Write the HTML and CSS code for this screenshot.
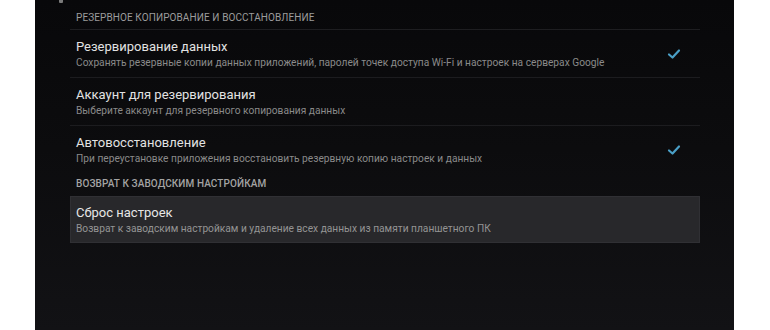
FILE: index.html
```html
<!DOCTYPE html>
<html lang="ru">
<head>
<meta charset="utf-8">
<link rel="stylesheet" href="styles.css">
</head>
<body>
<div class="screen">
  <span class="top-mark"></span>
  <div class="list">
    <div class="header first">РЕЗЕРВНОЕ КОПИРОВАНИЕ И ВОССТАНОВЛЕНИЕ</div>
    <div class="item divided">
      <div class="text">
        <div class="title">Резервирование данных</div>
        <div class="sub">Сохранять резервные копии данных приложений, паролей точек доступа Wi-Fi и настроек на серверах Google</div>
      </div>
      <svg class="check" viewBox="0 0 14 12" width="14" height="12"><path d="M2 6.5 L5.5 9.5 L12 2.5" fill="none" stroke="#4a9fc6" stroke-width="2.2" stroke-linecap="round" stroke-linejoin="round"/></svg>
    </div>
    <div class="item divided">
      <div class="text">
        <div class="title">Аккаунт для резервирования</div>
        <div class="sub">Выберите аккаунт для резервного копирования данных</div>
      </div>
    </div>
    <div class="item">
      <div class="text">
        <div class="title">Автовосстановление</div>
        <div class="sub">При переустановке приложения восстановить резервную копию настроек и данных</div>
      </div>
      <svg class="check" viewBox="0 0 14 12" width="14" height="12"><path d="M2 6.5 L5.5 9.5 L12 2.5" fill="none" stroke="#4a9fc6" stroke-width="2.2" stroke-linecap="round" stroke-linejoin="round"/></svg>
    </div>
    <div class="header second">ВОЗВРАТ К ЗАВОДСКИМ НАСТРОЙКАМ</div>
    <div class="item selected">
      <div class="text">
        <div class="title">Сброс настроек</div>
        <div class="sub">Возврат к заводским настройкам и удаление всех данных из памяти планшетного ПК</div>
      </div>
    </div>
  </div>
</div>
</body>
</html>
```

FILE: styles.css
```css
html, body {
  margin: 0;
  padding: 0;
  background: #ffffff;
}
body {
  font-family: Roboto, "Noto Sans", sans-serif;
}
.screen {
  position: relative;
  margin-left: 35px;
  width: 699px;
  height: 330px;
  background: linear-gradient(180deg, #08080a 0%, #0c0c0e 45%, #121215 100%);
  box-sizing: border-box;
  padding: 0 34px 0 35px;
}
.top-mark {
  position: absolute;
  left: 24px;
  top: 0;
  width: 4px;
  height: 3px;
  background: #7a7a7a;
  border-radius: 0 0 1px 1px;
}
.list {
  display: flex;
  flex-direction: column;
}
.header {
  font-size: 10px;
  line-height: 14px;
  color: #9c9c9c;
  padding-left: 6px;
  letter-spacing: 0.1px;
}
.header.first {
  padding-top: 11px;
  padding-bottom: 4px;
  border-bottom: 1px solid #1e1e21;
}
.header.second {
  padding-top: 4px;
  padding-bottom: 5px;
  font-weight: 500;
  color: #a4a4a4;
}
.item {
  display: flex;
  align-items: flex-start;
  justify-content: space-between;
  height: 47px;
  box-sizing: border-box;
  padding: 9px 19px 8px 6px;
}
.item.divided {
  height: 48px;
  border-bottom: 1px solid #1c1c1f;
}
.title {
  font-size: 13px;
  line-height: 16px;
  color: #e2e2e2;
}
.sub {
  margin-top: 2px;
  font-size: 10.2px;
  line-height: 12px;
  color: #8a8a8a;
  white-space: nowrap;
}
.check {
  margin-top: 9px;
}
.item.selected {
  background: #28282b;
  box-shadow: inset 0 0 0 1px #303034;
}
.item.selected .title {
  color: #e6e6e6;
}
.item.selected .sub {
  color: #949494;
}
```
